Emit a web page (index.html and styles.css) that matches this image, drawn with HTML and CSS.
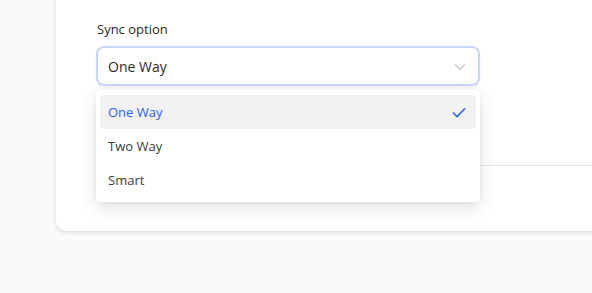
FILE: index.html
```html
<!DOCTYPE html>
<html>
<head>
<meta charset="utf-8">
<link rel="stylesheet" href="styles.css">
</head>
<body>
<div class="page">
  <div class="card">
    <div class="field">
      <div class="label">Sync option</div>
      <div class="select">
        <span class="value">One Way</span>
        <svg class="chev" width="12" height="8" viewBox="0 0 12 8"><path d="M1 1.5 L6 6.5 L11 1.5" fill="none" stroke="#c4c6cc" stroke-width="1.2"/></svg>
      </div>
      <div class="menu">
        <div class="item active"><span>One Way</span>
          <svg width="14" height="11" viewBox="0 0 14 11"><path d="M1 5.5 L5 9.5 L13 1.5" fill="none" stroke="#2b63f0" stroke-width="1.6"/></svg>
        </div>
        <div class="item"><span>Two Way</span></div>
        <div class="item"><span>Smart</span></div>
      </div>
    </div>
    <div class="sep"></div>
  </div>
</div>
</body>
</html>
```
FILE: styles.css
```css
html, body { margin: 0; padding: 0; }
body {
  background: #f8fbfa;
  font-family: "Open Sans", "Noto Sans", sans-serif;
  width: 592px; height: 293px; overflow: hidden;
}
.page { padding-left: 56px; }
.card {
  margin-top: -20px;
  width: 620px;
  height: 251px;
  background: #fff;
  border-radius: 10px;
  box-shadow: 0 2px 4px rgba(0,0,0,0.10), 0 0 1px rgba(0,0,0,0.10);
  box-sizing: border-box;
  padding: 40px 0 0 40px;
  position: relative;
}
.field { position: relative; width: 384px; }
.label {
  font-size: 13px; color: #2a2a2a; line-height: 18px; margin-bottom: 8px; margin-left: 1px;
}
.select {
  height: 40px; box-sizing: border-box;
  border: 2px solid #c9d6f6; border-radius: 8px;
  display: flex; align-items: center; justify-content: space-between;
  padding: 0 12px 0 10px;
  box-shadow: 0 1px 3px rgba(0,0,0,0.08);
}
.value { font-size: 14px; color: #2b2b2b; }
.chev { margin-top: 2px; }
.menu {
  position: absolute; left: 0; top: 70px; width: 384px;
  background: #fff; border-radius: 4px;
  box-shadow: 0 6px 18px rgba(0,0,0,0.11), 0 1px 4px rgba(0,0,0,0.07);
  padding: 5px 4px 5px 4px; box-sizing: border-box;
  z-index: 2;
}
.item {
  height: 34px; display: flex; align-items: center; justify-content: space-between;
  padding: 0 10px 0 8px; font-size: 13px; color: #3c3c3c; border-radius: 3px;
}
.item.active { background: #f2f2f5; color: #2b63f0; }
.sep {
  position: absolute; left: 60px; right: 0; top: 185px;
  height: 1px; background: #e6e6ee;
}
```
